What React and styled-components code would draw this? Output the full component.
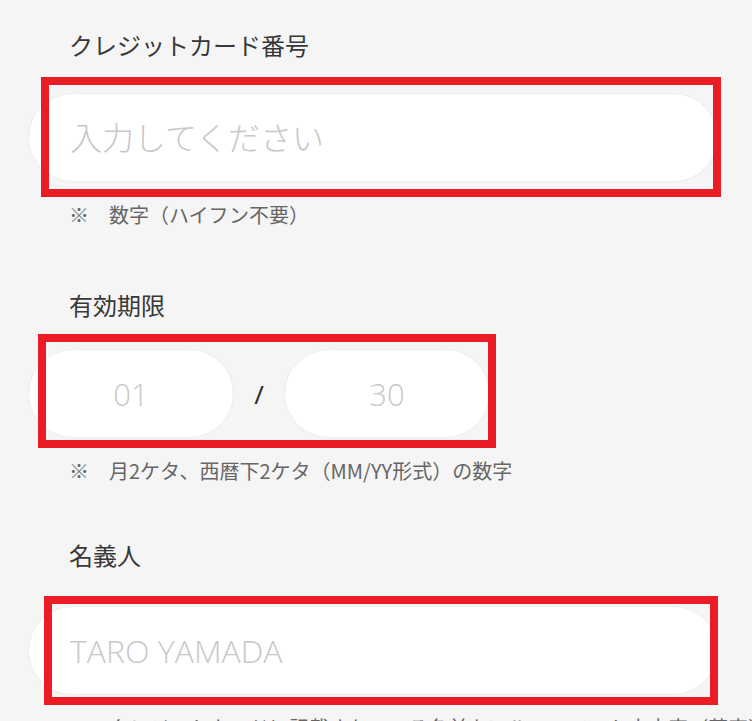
import React from "react";
import styled, { createGlobalStyle } from "styled-components";

const GlobalStyle = createGlobalStyle`
  html, body {
    margin: 0;
    padding: 0;
    background: #f5f5f5;
    font-family: "Noto Sans CJK JP", "Noto Sans", sans-serif;
  }
`;

const fields = [
  {
    label: "クレジットカード番号",
    top: 27,
    labelGap: 30,
    note: "※　数字（ハイフン不要）",
    mark: { left: 13, top: -16, width: 680, height: 120 },
  },
  {
    label: "有効期限",
    top: 59,
    labelGap: 26,
    note: "※　月2ケタ、西暦下2ケタ（MM/YY形式）の数字",
    mark: { left: 10, top: -15, width: 458, height: 114 },
    expiry: true,
  },
  {
    label: "名義人",
    top: 53,
    labelGap: 33,
    note: "※　クレジットカードに記載されている名前をアルファベット大文字（英字）で入力してください",
    mark: { left: 16, top: -10, width: 674, height: 109 },
    placeholder: "TARO YAMADA",
  },
];

export default function App() {
  return (
    <Page>
      <GlobalStyle />
      {fields.map((f) => (
        <Section key={f.label} $top={f.top}>
          <Label $gap={f.labelGap}>{f.label}</Label>
          <InputWrap>
            {f.expiry ? (
              <ExpiryRow>
                <TextInput $short placeholder="01" />
                <Slash>/</Slash>
                <TextInput $short placeholder="30" />
              </ExpiryRow>
            ) : (
              <TextInput placeholder={f.placeholder || "入力してください"} />
            )}
            <Highlight
              $left={f.mark.left}
              $top={f.mark.top}
              $width={f.mark.width}
              $height={f.mark.height}
            />
          </InputWrap>
          <Note>{f.note}</Note>
        </Section>
      ))}
    </Page>
  );
}

const Page = styled.div`
  width: 752px;
  height: 721px;
  overflow: hidden;
  padding-left: 28px;
  box-sizing: border-box;
`;

const Section = styled.section`
  padding-top: ${(p) => p.$top}px;
`;

const Label = styled.div`
  margin: 0 0 ${(p) => p.$gap}px 41px;
  font-size: 24px;
  line-height: 36px;
  color: #383838;
`;

const InputWrap = styled.div`
  position: relative;
  width: 690px;
`;

const ExpiryRow = styled.div`
  display: flex;
  align-items: center;
`;

const TextInput = styled.input`
  box-sizing: border-box;
  width: ${(p) => (p.$short ? "206px" : "690px")};
  height: 89px;
  border: 1px solid #ececec;
  border-radius: 45px;
  background: #ffffff;
  padding: 0 0 0 ${(p) => (p.$short ? "0" : "41px")};
  text-align: ${(p) => (p.$short ? "center" : "left")};
  font-family: "Open Sans", "Noto Sans CJK JP", sans-serif;
  font-size: ${(p) => (p.$short ? "31px" : "32px")};
  font-weight: 300;
  color: #333;
  outline: none;

  &::placeholder {
    color: #c8c8c8;
  }
`;

const Slash = styled.span`
  width: 50px;
  text-align: center;
  font-family: "Noto Sans", sans-serif;
  font-size: 26px;
  font-weight: 400;
  color: #2e2e2e;
`;

const Highlight = styled.div`
  position: absolute;
  left: ${(p) => p.$left}px;
  top: ${(p) => p.$top}px;
  width: ${(p) => p.$width}px;
  height: ${(p) => p.$height}px;
  box-sizing: border-box;
  border: 8px solid #ea1d27;
  pointer-events: none;
`;

const Note = styled.div`
  margin: 19px 0 0 41px;
  font-size: 20px;
  line-height: 27px;
  color: #666666;
  white-space: nowrap;
`;
